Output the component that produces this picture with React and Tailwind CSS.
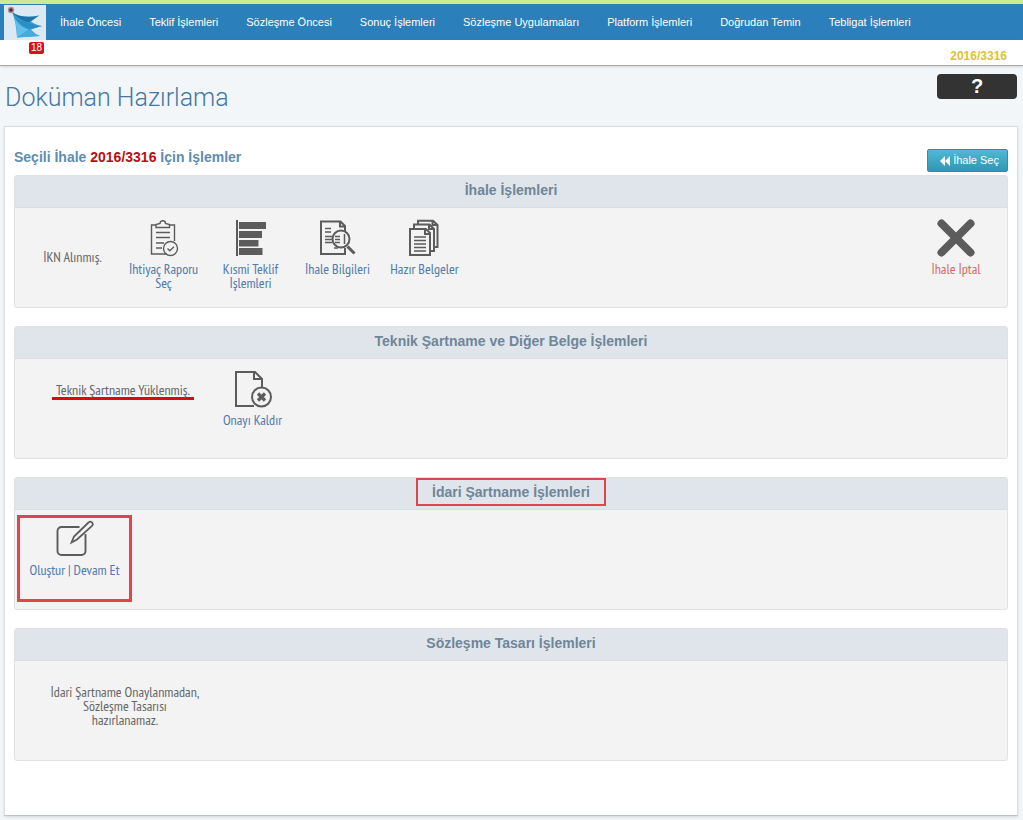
import React from "react";

const narrow = "font-['PT_Sans_Narrow','Liberation_Sans_Narrow',sans-serif]";

const navItems = [
  "İhale Öncesi",
  "Teklif İşlemleri",
  "Sözleşme Öncesi",
  "Sonuç İşlemleri",
  "Sözleşme Uygulamaları",
  "Platform İşlemleri",
  "Doğrudan Temin",
  "Tebligat İşlemleri",
];

function Logo() {
  return (
    <svg viewBox="0 0 42 35" className="h-[35px] w-[42px] shrink-0 bg-[#dce9f3]" aria-hidden="true">
      <path d="M8 7C15 12 25 13 35 10.500L27 16.500C31 19 34 20.500 38 21L27 24.500C30 28 33 30 36 31L13 32.500C12.500 23 11 14 8 7Z" fill="#3ba5d9" />
      <path d="M8 7C15 12 25 13 35 10.500L25 17.500C17 16 12 12 8 7Z" fill="#1c76a8" />
      <path d="M9 9C13 14 18 17 25 17.500C30 20 34 21 38 21L25 24.500C17 21 12 16 9 9Z" fill="#2b8fc4" />
      <path d="M10 12C13 18 18 23 25 24.500L13 32.500C13 25 12 18 10 12Z" fill="#62bfe8" />
      <path d="M13 32.500L25 24.500C29 28 32 30 36 31Z" fill="#45abdb" />
      <circle cx="7" cy="5" r="3.2" fill="#a9939c" />
      <circle cx="7" cy="5" r="1.8" fill="#5b2436" />
    </svg>
  );
}

function Icon({ children }) {
  return (
    <svg viewBox="0 0 38 38" className="h-[38px] w-[38px]" fill="none" stroke="#5c5c5c" strokeWidth="2" aria-hidden="true">
      {children}
    </svg>
  );
}

function ClipboardIcon() {
  return (
    <Icon>
      <g strokeWidth="1.4">
        <path d="M11 6H6.500V35H22M24 6H29.500V22" />
        <path d="M11 8.500V5.500L15 4.500A2.700 2.700 0 0 1 20.500 4.500L24.500 5.500V8.500Z" />
        <path d="M11 13.500H25M11 18.500H25M11 24H19M11 29H17" />
        <circle cx="25.500" cy="29.500" r="7" />
        <path d="M22.500 29.500L24.800 31.700L29 27.800" />
      </g>
    </Icon>
  );
}

function BarsIcon() {
  return (
    <Icon>
      <g fill="#5c5c5c" stroke="none">
        <path d="M4 1H6V37H4ZM7 3H34V10H7ZM7 12H30V19H7ZM7 21H26.500V27.500H7ZM7 29H30.500V36H7Z" />
      </g>
    </Icon>
  );
}

function SearchDocIcon() {
  return (
    <Icon>
      <path d="M26 12V7L21.500 2.500H2V35H26V29M21 2.500V7.500H26" />
      <path d="M6 9.500H12M6 13H12M6 17.500H13M6 20.500H13M6 23.500H13" strokeWidth="1.600" />
      <circle cx="22" cy="20" r="8.500" />
      <path d="M16 17.500H21M16 20.500H21M16 23.500H21M25.500 15V25M15 29H19" strokeWidth="1.500" />
      <path d="M28.500 27.500L35.500 34.500" strokeWidth="3" />
    </Icon>
  );
}

function DocsIcon() {
  return (
    <Icon>
      <path d="M4 10H20L24 14V36H4ZM19 10V15H24" />
      <path d="M8 9V5.500H23.500L28 10V32H25M23 5.500V10H28" />
      <path d="M12 5V1.800H27L31.500 6V28H29M26.500 2V6H31.500" />
      <path d="M8 18H20M8 21.500H20M8 25H20M8 28.500H20M8 32H20" strokeWidth="1.500" />
    </Icon>
  );
}

function RemoveDocIcon() {
  return (
    <Icon>
      <path d="M28 17V9L21 2H2V36H20M20 2V9H28" />
      <circle cx="27.500" cy="27" r="9.500" />
      <path d="M24 23.500L31 30.500M31 23.500L24 30.500" strokeWidth="3.200" />
    </Icon>
  );
}

function EditIcon() {
  return (
    <Icon>
      <path d="M23.500 7H5.500A4 4 0 0 0 1.500 11V31A4 4 0 0 0 5.500 35H25.500A4 4 0 0 0 29.500 31V14" strokeWidth="1.900" />
      <path d="M15.500 22.500L18 16.500L32.500 2.500A2.300 2.300 0 0 1 36 5.800L21 19.500Z" strokeWidth="1.800" />
    </Icon>
  );
}

function CancelIcon() {
  return (
    <Icon>
      <path d="M4.500 4.500L33.500 33.500M33.500 4.500L4.500 33.500" strokeWidth="8" strokeLinecap="round" />
    </Icon>
  );
}

function Tile({ icon, label, className = "w-[87px] text-[#5079ae]" }) {
  return (
    <a href="#" className={`flex shrink-0 flex-col items-center gap-[5px] text-center ${className}`}>
      {icon}
      <span className="px-1">{label}</span>
    </a>
  );
}

function Panel({ title, marked = false, children }) {
  return (
    <section className="flex min-h-[133px] flex-col rounded-[3px] border border-[#dfe1e3] bg-[#f3f3f3]">
      <h3 className="flex h-8 items-center justify-center border-b border-[#d9dee2] bg-[#dfe5eb] pb-[3px] text-sm font-bold text-[#6f8599]">
        <span className={marked ? "border-2 border-[#dc474c] px-[14px] py-[2px]" : ""}>{title}</span>
      </h3>
      <div className={`flex flex-1 items-start text-[14px] leading-[14px] text-[#666666] ${narrow}`}>{children}</div>
    </section>
  );
}

export default function App() {
  return (
    <div className="flex min-h-screen flex-col bg-[#f3f6f9] pb-1 font-['Liberation_Sans',Arial,sans-serif]">
      <header>
        <nav className="flex h-10 items-center border-t-4 border-[#cdea93] bg-[#2b80bc] pl-1">
          <Logo />
          <ul className="flex gap-7 pl-[14px] text-[11px] leading-4 whitespace-nowrap text-white">
            {navItems.map((item) => (
              <li key={item}>
                <a href="#">{item}</a>
              </li>
            ))}
          </ul>
        </nav>
        <div className="flex h-[26px] items-start justify-between border-b border-[#a8a8a8] bg-white pr-4 pl-[29px] shadow-sm">
          <span className="mt-[2px] rounded-[2px] bg-[#d9101b] px-[2px] text-[10px] leading-3 text-white">18</span>
          <span className="mt-2 text-xs font-bold text-[#e0c22e]">2016/3316</span>
        </div>
      </header>

      <div className="flex h-[60px] items-start justify-between pr-[6px] pl-[5px]">
        <h1 className="pt-[14px] font-['Roboto',sans-serif] text-[25px] leading-9 font-light text-[#4577a3]">
          Doküman Hazırlama
        </h1>
        <button type="button" aria-label="Yardım" className="mt-2 h-[25px] w-20 rounded-[4px] bg-[#333333] text-xl leading-[25px] font-bold text-white">
          ?
        </button>
      </div>

      <main className="mr-[5px] ml-1 flex-1 border border-[#dcdfe2] border-b-[#b9c3cb] bg-white px-[9px] pt-[22px] pb-[54px] shadow-sm">
        <div className="flex h-[26px] items-start justify-between">
          <h2 className="text-sm leading-4 font-bold text-[#5f8cae]">
            Seçili İhale <span className="text-[#b80d14]">2016/3316</span> İçin İşlemler
          </h2>
          <button
            type="button"
            className="flex h-[23px] items-center gap-[3px] rounded-[2px] border border-[#2f8fab] bg-linear-to-b from-[#4fb9d6] to-[#2f96b4] pr-2 pl-3 text-[11px] text-white"
          >
            <svg viewBox="0 0 10 10" className="h-[10px] w-[10px]" fill="currentColor" aria-hidden="true">
              <path d="M5 0V10L0 5ZM10 0V10L5 5Z" />
            </svg>
            İhale Seç
          </button>
        </div>

        <div className="flex flex-col gap-[18px]">
          <Panel title="İhale İşlemleri">
            <p className="w-[105px] shrink-0 pt-[42px] pl-[10px] text-center">İKN Alınmış.</p>
            <div className="flex flex-1 pt-[11px]">
              <Tile icon={<ClipboardIcon />} label="İhtiyaç Raporu Seç" />
              <Tile icon={<BarsIcon />} label="Kısmi Teklif İşlemleri" />
              <Tile icon={<SearchDocIcon />} label="İhale Bilgileri" />
              <Tile icon={<DocsIcon />} label="Hazır Belgeler" />
            </div>
            <div className="pt-[11px] pr-2">
              <Tile icon={<CancelIcon />} label="İhale İptal" className="w-[86px] text-[#d9686a]" />
            </div>
          </Panel>

          <Panel title="Teknik Şartname ve Diğer Belge İşlemleri">
            <p className="mt-[24px] mr-[15px] ml-[37px] w-[142px] shrink-0 border-b-[3px] border-[#d80b10] text-center">
              Teknik Şartname Yüklenmiş.
            </p>
            <div className="pt-[11px]">
              <Tile icon={<RemoveDocIcon />} label="Onayı Kaldır" />
            </div>
          </Panel>

          <Panel title="İdari Şartname İşlemleri" marked>
            <div className="mt-[5px] ml-[2px] h-[87px] border-[3px] border-[#dc474c] pt-[2px]">
              <Tile icon={<EditIcon />} label="Oluştur | Devam Et" className="w-[109px] text-[#5079ae]" />
            </div>
          </Panel>

          <Panel title="Sözleşme Tasarı İşlemleri">
            <p className="mt-[24px] ml-[30px] w-40 text-center">
              İdari Şartname Onaylanmadan, Sözleşme Tasarısı
              <br />
              hazırlanamaz.
            </p>
          </Panel>
        </div>
      </main>
    </div>
  );
}
